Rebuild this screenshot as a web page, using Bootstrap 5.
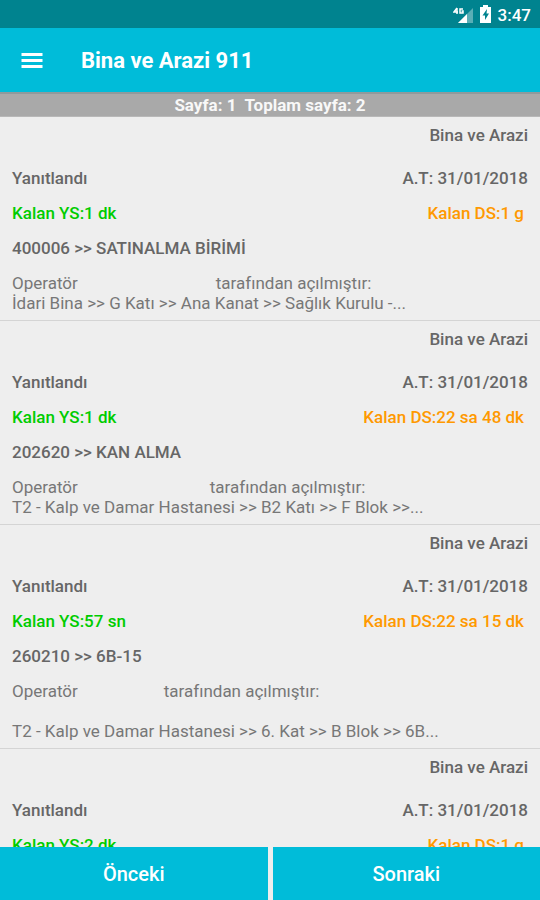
<!DOCTYPE html>
<html lang="tr">
<head>
<meta charset="utf-8">
<meta name="viewport" content="width=device-width, initial-scale=1">
<title>Bina ve Arazi 911</title>
<link href="https://cdn.jsdelivr.net/npm/bootstrap@5.3.0/dist/css/bootstrap.min.css" rel="stylesheet">
<style>
body { font-family: Roboto, "Noto Sans", sans-serif; font-size: 17px; line-height: 20px; background: #eee; color: #666; }
.status-bar { height: 28px; background: #00838f; font-size: 17px; padding: 2px 9px 0 0; gap: 5px; }
.app-bar { height: 64px; background: #00bcd9; padding: 2px 20px 0; gap: 37px; }
.app-bar h1 { font-size: 22px; line-height: 28px; }
.page-band { height: 25px; background: #a9a9a9; border-top: 2px solid #8f9a9c; border-bottom: 1px solid #b8b8b8; white-space: pre; color: #f8f8f8; }
.ticket-list { scrollbar-width: none; min-height: 0; }
.ticket-list::-webkit-scrollbar { display: none; }
.ticket { padding: 8px 12px 7px; border-bottom: 1px solid #d4d4d4; }
.ticket-status { margin-top: 23px; }
.ticket-row { margin-top: 15px; }
.ticket-due { padding-right: 4px; }
.text-remaining { color: #0c0; }
.text-deadline { color: #f90; }
.ticket-note { color: #777; }
.operator-name { height: 1px; }
.name-long { width: 138px; }
.name-mid { width: 132px; }
.name-short { width: 86px; }
.pager { gap: 5px; }
.pager-btn { height: 53px; background: #00bcd9; color: #fff; font-size: 20px; font-weight: 500; }
.pager-btn:hover { background: #00a9c3; color: #fff; }
</style>
</head>
<body class="d-flex flex-column vh-100 overflow-hidden">
<div class="status-bar d-flex align-items-center justify-content-end text-white fw-medium flex-shrink-0">
  <svg width="21" height="18" viewBox="0 0 21 18" aria-hidden="true">
    <path d="M20 2v15H5z" fill="#fff" fill-opacity=".35"/>
    <path d="M14 8v9H5z" fill="#fff"/>
    <path d="M4 2L1 6h4M4 2v6M10 3H7v4h3V5H8.500" fill="none" stroke="#fff" stroke-width="1.500"/>
  </svg>
  <svg width="14" height="20" viewBox="0 0 14 20" aria-hidden="true">
    <path d="M4 0h5v2h3v16H1V2h3z" fill="#fff"/>
    <path d="M8 4L3.500 10.500H6V15l4-6.500H7.500z" fill="#00838f"/>
  </svg>
  <span>3:47</span>
</div>
<header class="app-bar d-flex align-items-center text-white flex-shrink-0">
  <button type="button" class="btn p-0 border-0 d-flex text-white" aria-label="Menü">
    <svg width="24" height="24" viewBox="0 0 24 24" fill="currentColor" aria-hidden="true"><path d="M1.500 4h21v3h-21zM1.500 10h21v3h-21zM1.500 16h21v3h-21z"/></svg>
  </button>
  <h1 class="m-0 fw-bold">Bina ve Arazi 911</h1>
</header>
<div class="page-band d-flex align-items-center justify-content-center fw-bold flex-shrink-0">Sayfa: 1  Toplam sayfa: 2</div>
<main class="ticket-list flex-grow-1 overflow-auto">
  <article class="ticket">
    <div class="text-end fw-medium">Bina ve Arazi</div>
    <div class="ticket-status d-flex justify-content-between fw-medium"><span>Yanıtlandı</span><span>A.T: 31/01/2018</span></div>
    <div class="ticket-row ticket-due d-flex justify-content-between fw-medium"><span class="text-remaining">Kalan YS:1 dk</span><span class="text-deadline">Kalan DS:1 g</span></div>
    <div class="ticket-row fw-medium">400006 &gt;&gt; SATINALMA BİRİMİ</div>
    <div class="ticket-row ticket-note">Operatör<span class="operator-name name-long d-inline-block"></span>tarafından açılmıştır:<br>İdari Bina &gt;&gt; G Katı &gt;&gt; Ana Kanat &gt;&gt; Sağlık Kurulu -...</div>
  </article>
  <article class="ticket">
    <div class="text-end fw-medium">Bina ve Arazi</div>
    <div class="ticket-status d-flex justify-content-between fw-medium"><span>Yanıtlandı</span><span>A.T: 31/01/2018</span></div>
    <div class="ticket-row ticket-due d-flex justify-content-between fw-medium"><span class="text-remaining">Kalan YS:1 dk</span><span class="text-deadline">Kalan DS:22 sa 48 dk</span></div>
    <div class="ticket-row fw-medium">202620 &gt;&gt; KAN ALMA</div>
    <div class="ticket-row ticket-note">Operatör<span class="operator-name name-mid d-inline-block"></span>tarafından açılmıştır:<br>T2 - Kalp ve Damar Hastanesi &gt;&gt; B2 Katı &gt;&gt; F Blok &gt;&gt;...</div>
  </article>
  <article class="ticket">
    <div class="text-end fw-medium">Bina ve Arazi</div>
    <div class="ticket-status d-flex justify-content-between fw-medium"><span>Yanıtlandı</span><span>A.T: 31/01/2018</span></div>
    <div class="ticket-row ticket-due d-flex justify-content-between fw-medium"><span class="text-remaining">Kalan YS:57 sn</span><span class="text-deadline">Kalan DS:22 sa 15 dk</span></div>
    <div class="ticket-row fw-medium">260210 &gt;&gt; 6B-15</div>
    <div class="ticket-row ticket-note">Operatör<span class="operator-name name-short d-inline-block"></span>tarafından açılmıştır:<br><br>T2 - Kalp ve Damar Hastanesi &gt;&gt; 6. Kat &gt;&gt; B Blok &gt;&gt; 6B...</div>
  </article>
  <article class="ticket">
    <div class="text-end fw-medium">Bina ve Arazi</div>
    <div class="ticket-status d-flex justify-content-between fw-medium"><span>Yanıtlandı</span><span>A.T: 31/01/2018</span></div>
    <div class="ticket-row ticket-due d-flex justify-content-between fw-medium"><span class="text-remaining">Kalan YS:2 dk</span><span class="text-deadline">Kalan DS:1 g</span></div>
  </article>
</main>
<nav class="pager d-flex flex-shrink-0" aria-label="Sayfalar">
  <button type="button" class="pager-btn btn rounded-0 border-0 flex-fill w-50">Önceki</button>
  <button type="button" class="pager-btn btn rounded-0 border-0 flex-fill w-50">Sonraki</button>
</nav>
<script src="https://cdn.jsdelivr.net/npm/bootstrap@5.3.0/dist/js/bootstrap.bundle.min.js"></script>
</body>
</html>
